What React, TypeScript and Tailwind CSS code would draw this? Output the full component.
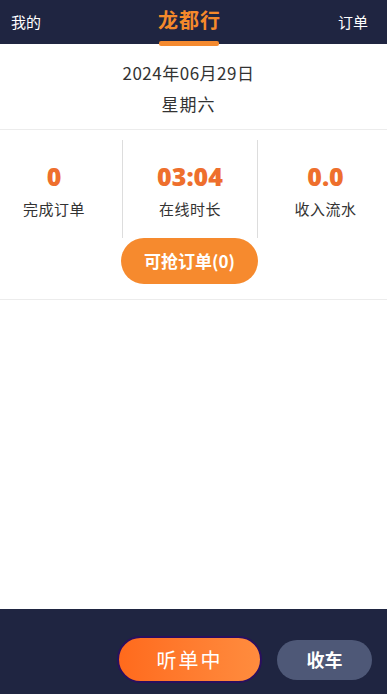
import React from "react";

export default function App() {
  const font = { fontFamily: '"Noto Sans CJK SC", "Noto Sans", sans-serif' };
  const num = { fontFamily: '"Open Sans", sans-serif', fontWeight: 800 };
  return (
    <div className="w-[387px] h-[694px] bg-white flex flex-col overflow-hidden" style={font}>
      <div className="relative h-[44px] bg-[#1f2541] flex items-center justify-between px-[11px] shrink-0">
        <span className="text-white text-[15px]">我的</span>
        <span className="absolute left-[158px] top-[5px] text-[#f5892b] text-[20px] font-bold leading-[30px] tracking-[1px]">龙都行</span>
        <span className="text-white text-[15px] mr-[8px]">订单</span>
        <div className="absolute left-[159px] top-[41px] w-[60px] h-[5px] rounded-[2px] bg-[#f58a2f]" />
      </div>
      <div className="flex flex-col items-center border-b border-[#ececec] h-[86px] shrink-0 pr-[10px]">
        <div className="mt-[17px] text-[17px] text-[#333] leading-[24px] tracking-[0.5px]">2024年06月29日</div>
        <div className="mt-[7px] text-[17px] text-[#333] leading-[24px] tracking-[1px]">星期六</div>
      </div>
      <div className="flex flex-col border-b border-[#ececec] h-[170px] shrink-0">
        <div className="grid grid-cols-[122px_136px_129px] w-full mt-[10px] h-[98px]">
          <div className="flex flex-col items-center pr-[14px]">
            <div className="mt-[20px] text-[#ee6f2d] text-[25px] leading-[32px]" style={num}>0</div>
            <div className="mt-[6px] text-[15px] text-[#333] tracking-[0.5px]">完成订单</div>
          </div>
          <div className="flex flex-col items-center border-x border-[#dddddd]">
            <div className="mt-[20px] text-[#ee6f2d] text-[25px] leading-[32px]" style={num}>03:04</div>
            <div className="mt-[6px] text-[15px] text-[#333] tracking-[0.5px]">在线时长</div>
          </div>
          <div className="flex flex-col items-center pl-[6px]">
            <div className="mt-[20px] text-[#ee6f2d] text-[25px] leading-[32px]" style={num}>0.0</div>
            <div className="mt-[6px] text-[15px] text-[#333] tracking-[0.5px]">收入流水</div>
          </div>
        </div>
        <button className="ml-[121px] w-[137px] h-[46px] rounded-full bg-[#f68a2e] text-white text-[17px] font-bold">可抢订单(0)</button>
      </div>
      <div className="flex-1" />
      <div className="h-[85px] bg-[#1f2541] shrink-0 flex items-center justify-end pr-[15px] gap-[15px] pt-[16px]">
        <button className="w-[145px] h-[47px] rounded-full border-2 border-[#2a0f5e] bg-gradient-to-r from-[#ff6a1c] to-[#ff8c3e] text-white text-[20px] tracking-[2px]">听单中</button>
        <button className="w-[95px] h-[40px] rounded-full bg-[#4e5877] text-white text-[18px] font-bold">收车</button>
      </div>
    </div>
  );
}
